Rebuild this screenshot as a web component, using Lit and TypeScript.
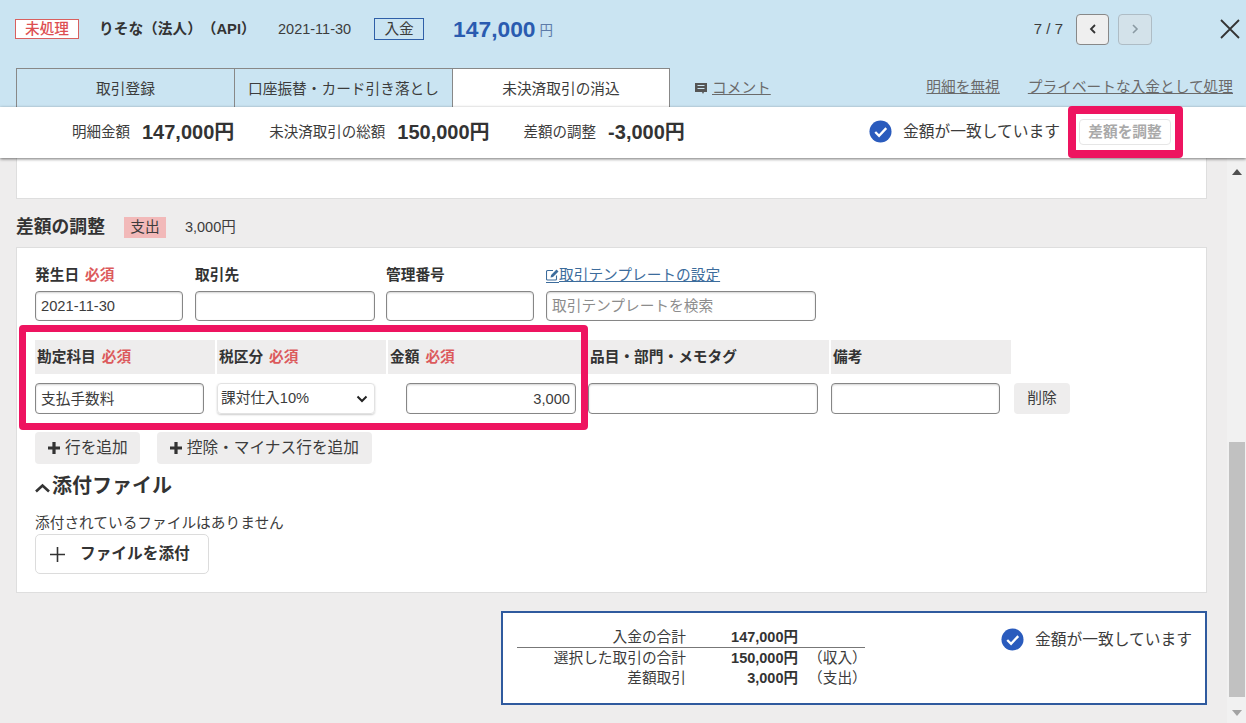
import { LitElement, html, css } from "lit";
import { customElement } from "lit/decorators.js";

const check = html`<svg class="check" viewBox="0 0 24 24" width="23" height="23"><circle cx="12" cy="12" r="11.5" fill="#2a5bbd"/><path d="M6.5 12.5l4 4 7.5-8" fill="none" stroke="#fff" stroke-width="2.4"/></svg>`;
const plus = html`<svg viewBox="0 0 14 14" width="14" height="14"><path d="M7 1v12M1 7h12" stroke="#333" stroke-width="3.2" fill="none"/></svg>`;

@customElement("app-root")
export class AppRoot extends LitElement {
  static styles = css`
    :host {
      display: block;
      width: 1246px;
      height: 723px;
      overflow: hidden;
      background: #eeeded;
      color: #3c3c3c;
      font-family: "Liberation Sans", "Noto Sans CJK JP", sans-serif;
      font-size: 14.7px;
      line-height: 20px;
      text-spacing-trim: space-all;
    }
    * { box-sizing: border-box; }
    header { height: 107px; background: #cae4f2; }
    .top { height: 58px; margin-bottom: 10px; padding-left: 15px; display: flex; align-items: center; }
    .badge { width: 64px; height: 20px; border: 1px solid #d9605f; background: #fff; color: #dd4f52; text-align: center; line-height: 18px; font-weight: 500; }
    .name { margin-left: 20px; font-weight: 700; color: #333; width: 148px; white-space: nowrap; }
    .date { margin-left: 31px; font-size: 14.5px; }
    .kind { margin-left: 23px; width: 50px; height: 22px; border: 1px solid #2f5fa8; text-align: center; line-height: 20px; }
    .amount { margin-left: 29px; font-size: 22.8px; font-weight: 700; color: #2a5bb0; }
    .yen { margin-left: 4px; font-size: 13.5px; color: #5d7ba8; margin-top: 3px; }
    .pager { margin-left: auto; font-size: 15px; }
    .nav { width: 33px; height: 31px; margin-left: 13px; border: 1px solid #888; border-radius: 4px; background: #efefef; display: flex; align-items: center; justify-content: center; }
    .nav.off { margin-left: 9px; width: 34px; border-color: #aebcc5; background: #d3e2ea; }
    .close { margin: 0 6px 0 68px; display: block; }
    .tabs { height: 39px; padding-left: 16px; display: flex; align-items: center; }
    .tab { width: 218px; height: 39px; border: 1px solid #888; border-bottom: 0; text-align: center; line-height: 40px; white-space: nowrap; }
    .tab:first-child { width: 219px; }
    .tab + .tab { border-left: 0; }
    .tab.on { background: #fff; width: 217px; }
    .comment { margin-left: 25px; display: flex; align-items: center; gap: 5px; color: #666; }
    .tabs a { color: #6a6a6a; text-decoration: underline; }
    .links { margin-left: auto; padding-right: 13px; display: flex; gap: 28px; margin-top: -2px; }
    .summary { position: relative; z-index: 2; height: 51px; background: #fff; box-shadow: 0 1px 3px rgba(0,0,0,.55); display: flex; align-items: center; padding: 0 0 2px 72px; font-size: 14.5px; }
    .summary b { font-size: 20px; margin-left: 12px; color: #333; white-space: nowrap; }
    .sg { display: flex; align-items: center; margin-right: 35px; white-space: nowrap; }
    .sg + .sg { margin-right: 34px; }
    .status { display: flex; align-items: center; font-size: 15.75px; white-space: nowrap; }
    .check { display: block; margin-right: 11px; }
    .summary .status { margin-left: auto; }
    .adjust { position: relative; margin: 0 75px 0 19px; width: 92px; height: 26px; border: 1px solid #e6e6e6; border-radius: 4px; color: #a9a9a9; text-align: center; line-height: 24px; font-weight: 700; font-size: 14.7px; white-space: nowrap; }
    .adjust::after { content: ""; position: absolute; inset: -14px -13px -14px -12px; border: 8px solid #ee1460; border-radius: 4px; }
    .main { height: 565px; display: flex; }
    .content { width: 1227px; padding: 0 20px 0 16px; }
    .stub { height: 41px; background: #fff; border: 1px solid #dedede; border-top: 0; }
    .section { height: 24px; margin: 16px 0 8px; display: flex; align-items: center; }
    .section h2 { margin: 0; font-size: 17.8px; font-weight: 700; color: #333; }
    .pay { margin-left: 19px; width: 42px; height: 21px; background: #f2b9b9; text-align: center; line-height: 21px; }
    .paid { margin-left: 19px; font-size: 14.5px; }
    .card { height: 346px; background: #fff; border: 1px solid #dedede; padding: 17px 18px 0; }
    .meta { display: grid; grid-template-columns: 160px 191px 160px 270px; row-gap: 6px; }
    label, .th { font-weight: 700; color: #333; white-space: nowrap; }
    .req { color: #dc5a5c; margin-left: 6px; }
    .link { color: #3c6c9c; text-decoration: underline; font-weight: 400; display: flex; align-items: center; }
    input {
      display: block; height: 30px; padding: 0 5px; border: 1px solid #868686; border-radius: 4px; background: #fff;
      box-shadow: inset 0 1px 2px rgba(0,0,0,.18); font: inherit; color: #3c3c3c; outline: 0;
    }
    input::placeholder { color: #8c8c8c; opacity: 1; }
    .w148 { width: 148px; } .w180 { width: 180px; } .w270 { width: 270px; } .w169 { width: 169px; } .w230 { width: 230px; }
    .table { position: relative; margin-top: 19px; display: grid; grid-template-columns: 180px 169px 198px 241px 180px 70px; column-gap: 2px; row-gap: 9px; }
    .th { height: 34px; background: #eeeded; padding-left: 2px; line-height: 34px; }
    .table input { height: 31px; }
    .table input.kanji { padding-bottom: 3px; }
    .select { position: relative; width: 158px; height: 31px; border: 1px solid #e2e2e2; border-radius: 4px; box-shadow: 0 1px 2px rgba(0,0,0,.2); padding-left: 3px; line-height: 28px; }
    .select svg { position: absolute; right: 6px; top: 11px; }
    .num { text-align: right; margin-left: 18px; width: 170px; }
    .del { margin-left: 1px; width: 56px; height: 31px; background: #eeeded; border-radius: 4px; text-align: center; line-height: 30px; }
    .hl { position: absolute; left: -16px; top: -15px; width: 569px; height: 105px; border: 7px solid #ee1460; border-radius: 4px; pointer-events: none; }
    .adds { margin-top: 18px; display: flex; gap: 17px; }
    .add { height: 32px; background: #eeeded; border-radius: 4px; display: flex; align-items: center; gap: 4px; padding: 0 12px; white-space: nowrap; font-size: 15.7px; }
    .add + .add { padding-right: 13px; }
    .att { margin: 10px 0 0; height: 24px; display: flex; align-items: center; font-size: 20px; font-weight: 700; color: #333; gap: 2px; }
    .att svg { margin-top: 4px; }
    .note { margin-top: 15px; }
    .file { margin-top: 1px; width: 174px; height: 40px; border: 1px solid #dcdcdc; border-radius: 5px; display: flex; align-items: center; padding-left: 14px; gap: 15px; font-weight: 700; font-size: 15.7px; color: #333; white-space: nowrap; }
    .totals { margin: 18px 0 0 485px; width: 706px; height: 94px; border: 2px solid #2f5a9e; background: #fff; padding: 14px 13px 0 14px; display: flex; justify-content: space-between; }
    .tt { position: relative; width: 348px; display: grid; grid-template-columns: 169px 112px 67px; grid-auto-rows: 20.5px; align-content: start; }
    .tt span:nth-child(3n+1) { text-align: right; }
    .tt span:nth-child(3n+2) { text-align: right; font-weight: 700; color: #333; font-size: 14.5px; }
    .tt span:nth-child(3n) { padding-left: 10px; white-space: nowrap; }
    .tt .line { position: absolute; left: 0; right: 0; top: 20px; height: 1px; background: #777; }
    .totals .status { align-self: flex-start; margin-top: 1px; }
    .sb { width: 19px; background: #f1f1f1; display: flex; flex-direction: column; align-items: center; padding-top: 11px; }
    .thumb { margin-top: auto; width: 16px; height: 255px; background: #c1c1c1; }
    .down { margin: 13px 0 7px; }
  `;

  render() {
    return html`
      <header>
        <div class="top">
          <div class="badge">未処理</div>
          <div class="name">りそな（法人）（API）</div>
          <div class="date">2021-11-30</div>
          <div class="kind">入金</div>
          <div class="amount">147,000</div>
          <div class="yen">円</div>
          <div class="pager">7 / 7</div>
          <div class="nav"><svg viewBox="0 0 10 12" width="10" height="12"><path d="M7 2L3 6l4 4" fill="none" stroke="#333" stroke-width="1.8"/></svg></div>
          <div class="nav off"><svg viewBox="0 0 10 12" width="10" height="12"><path d="M3 2l4 4-4 4" fill="none" stroke="#8a9aa3" stroke-width="1.6"/></svg></div>
          <svg class="close" viewBox="0 0 20 20" width="20" height="20"><path d="M1 1l18 18M19 1L1 19" stroke="#333" stroke-width="1.8" fill="none"/></svg>
        </div>
        <div class="tabs">
          <div class="tab">取引登録</div>
          <div class="tab">口座振替・カード引き落とし</div>
          <div class="tab on">未決済取引の消込</div>
          <div class="comment">
            <svg viewBox="0 0 12 12" width="12" height="12"><path d="M0 1h12v9H9l-1 2-1-2H0z" fill="#555"/><path d="M2.5 3.500h7M2.5 6.500h7" stroke="#cae4f2" stroke-width="1"/></svg>
            <a>コメント</a>
          </div>
          <div class="links"><a>明細を無視</a><a>プライベートな入金として処理</a></div>
        </div>
      </header>
      <div class="summary">
        <div class="sg">明細金額<b>147,000円</b></div>
        <div class="sg">未決済取引の総額<b>150,000円</b></div>
        <div class="sg">差額の調整<b>-3,000円</b></div>
        <div class="status">${check}金額が一致しています</div>
        <div class="adjust">差額を調整</div>
      </div>
      <div class="main">
        <div class="content">
          <div class="stub"></div>
          <div class="section"><h2>差額の調整</h2><span class="pay">支出</span><span class="paid">3,000円</span></div>
          <div class="card">
            <div class="meta">
              <label>発生日<span class="req">必須</span></label>
              <label>取引先</label>
              <label>管理番号</label>
              <a class="link"><svg viewBox="0 0 13 16" width="13" height="16"><path d="M10.500 8.500V12a1 1 0 0 1-1 1H1.500a1 1 0 0 1-1-1V4.500a1 1 0 0 1 1-1H7" fill="none" stroke="#3c6c9c" stroke-width="1.100"/><path d="M4.500 10.500l.6-2.500L10.500 2.500l2 2L7 10z" fill="#3c6c9c"/><path d="M0 15.500h13" stroke="#3c6c9c" stroke-width="1"/></svg>取引テンプレートの設定</a>
              <input class="w148" value="2021-11-30" />
              <input class="w180" />
              <input class="w148" />
              <input class="w270" placeholder="取引テンプレートを検索" />
            </div>
            <div class="table">
              <div class="th">勘定科目<span class="req">必須</span></div>
              <div class="th">税区分<span class="req">必須</span></div>
              <div class="th">金額<span class="req">必須</span></div>
              <div class="th">品目・部門・メモタグ</div>
              <div class="th">備考</div>
              <div></div>
              <input class="w169 kanji" value="支払手数料" />
              <div class="select">課対仕入10%<svg viewBox="0 0 12 8" width="12" height="8"><path d="M1.500 1.500L6 6l4.500-4.500" fill="none" stroke="#222" stroke-width="2"/></svg></div>
              <input class="num" value="3,000" />
              <input class="w230" />
              <input class="w169" />
              <div class="del">削除</div>
              <div class="hl"></div>
            </div>
            <div class="adds">
              <div class="add">${plus}行を追加</div>
              <div class="add">${plus}控除・マイナス行を追加</div>
            </div>
            <div class="att"><svg viewBox="0 0 15 10" width="15" height="10"><path d="M1 8.500L7.500 2.500 14 8.500" fill="none" stroke="#333" stroke-width="2.600"/></svg>添付ファイル</div>
            <div class="note">添付されているファイルはありません</div>
            <div class="file"><svg viewBox="0 0 15 15" width="15" height="15"><path d="M7.500 0v15M0 7.500h15" stroke="#333" stroke-width="1.600" fill="none"/></svg>ファイルを添付</div>
          </div>
          <div class="totals">
            <div class="tt">
              <span>入金の合計</span><span>147,000円</span><span></span>
              <span>選択した取引の合計</span><span>150,000円</span><span>（収入）</span>
              <span>差額取引</span><span>3,000円</span><span>（支出）</span>
              <div class="line"></div>
            </div>
            <div class="status">${check}金額が一致しています</div>
          </div>
        </div>
        <div class="sb">
          <svg viewBox="0 0 10 6" width="10" height="6"><path d="M0 6l5-6 5 6z" fill="#505050"/></svg>
          <div class="thumb"></div>
          <svg class="down" viewBox="0 0 10 6" width="10" height="6"><path d="M0 0l5 6 5-6z" fill="#a3a3a3"/></svg>
        </div>
      </div>
    `;
  }
}
